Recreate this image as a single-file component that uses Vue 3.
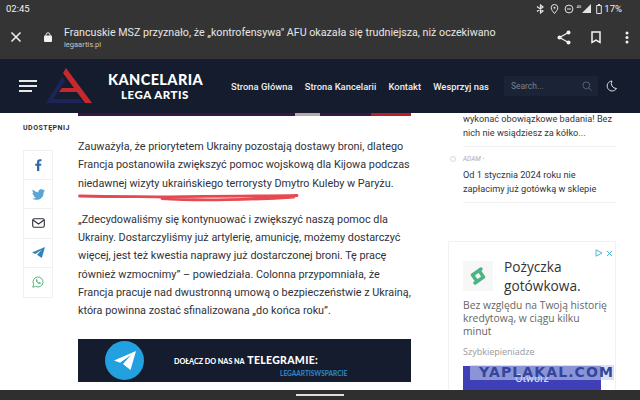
<script setup>
const menu = ['Strona Główna', 'Strona Kancelarii', 'Kontakt', 'Wesprzyj nas']
</script>

<template>
  <div class="screen">
    <div class="chrome">
      <div class="status">
        <span class="time">02:45</span>
        <div class="status_icons">
          <svg width="9" height="10" viewBox="0 0 9 10"><path d="M1 2.500 7 7 4.500 9V1L7 3 1 7.500" fill="none" stroke="#e4e4e4" stroke-width="1.200"/></svg>
          <svg width="9" height="10" viewBox="0 0 9 10"><path d="M4.500 9.500C2.500 7 1.200 5.500 1.200 3.800a3.300 3.300 0 0 1 6.600 0C7.800 5.500 6.500 7 4.500 9.500Z" fill="none" stroke="#e4e4e4" stroke-width="1"/><circle cx="4.500" cy="3.800" r="1" fill="#e4e4e4"/></svg>
          <svg width="10" height="10" viewBox="0 0 10 10"><circle cx="5" cy="5" r="3.900" fill="none" stroke="#e4e4e4" stroke-width="1"/><path d="M3 5h4" stroke="#e4e4e4" stroke-width="1"/></svg>
          <span class="net">4G</span>
          <svg width="9" height="9" viewBox="0 0 9 9"><path d="M9 0V9H0Z" fill="#e4e4e4"/></svg>
          <svg width="6" height="10" viewBox="0 0 6 10"><path d="M2 .5h2M.7 1.500h4.600v8H.7Z" fill="none" stroke="#e4e4e4"/></svg>
          <span class="battery">17%</span>
        </div>
      </div>
      <div class="url_row">
        <svg class="close" width="12" height="12" viewBox="0 0 12 12"><path d="M1.500 1.500 10.500 10.500M10.500 1.500 1.500 10.500" stroke="#f2f2f2" stroke-width="1.500"/></svg>
        <svg class="lock" width="8" height="10" viewBox="0 0 8 10"><path d="M2 4V2.800a2 2 0 0 1 4 0V4" fill="none" stroke="#f2f2f2"/><rect y="3.500" width="8" height="6.500" rx="1" fill="#f2f2f2"/></svg>
        <div class="url_text">
          <div class="page_title">Francuskie MSZ przyznało, że „kontrofensywa" AFU okazała się trudniejsza, niż oczekiwano</div>
          <div class="page_host">legaartis.pl</div>
        </div>
        <svg class="share" width="14" height="15" viewBox="0 0 14 15"><circle cx="11.500" cy="2.500" r="2" fill="#f2f2f2"/><circle cx="11.500" cy="12.500" r="2" fill="#f2f2f2"/><circle cx="2.500" cy="7.500" r="2" fill="#f2f2f2"/><path d="M11.500 2.500 2.500 7.500 11.500 12.500" fill="none" stroke="#f2f2f2" stroke-width="1.200"/></svg>
        <svg class="bookmark" width="10" height="13" viewBox="0 0 10 13"><path d="M1 1h8v10.500L5 9.200 1 11.500Z" fill="none" stroke="#f2f2f2" stroke-width="1.500"/></svg>
        <svg class="more" width="4" height="13" viewBox="0 0 4 13"><circle cx="2" cy="2" r="1.500" fill="#f2f2f2"/><circle cx="2" cy="6.500" r="1.500" fill="#f2f2f2"/><circle cx="2" cy="11" r="1.500" fill="#f2f2f2"/></svg>
      </div>
    </div>

    <header class="site_nav">
      <div class="burger"><span></span><span></span><span class="short"></span></div>
      <svg class="logo" width="47" height="36" viewBox="0 0 47 36">
        <path d="M16 9 19 13 7 31H34L37 35H0Z" fill="#1c2458"/>
        <path d="M20 0 46 35H39L17 5ZM16 20H30L33 24H13Z" fill="#c5282f"/>
      </svg>
      <div class="brand">
        <div class="brand_top">KANCELARIA</div>
        <div class="brand_sub">LEGA ARTIS</div>
      </div>
      <nav class="menu">
        <a v-for="item in menu" :key="item">{{ item }}</a>
      </nav>
      <div class="search">
        <span>Search...</span>
        <svg width="10" height="10" viewBox="0 0 10 10"><circle cx="4.300" cy="4.300" r="3.400" fill="none" stroke="#59606e" stroke-width="1"/><path d="M6.800 6.800 9.500 9.500" stroke="#59606e" stroke-width="1"/></svg>
      </div>
      <svg class="moon" width="11" height="12" viewBox="0 0 11 12"><path d="M6 1a5 5 0 1 0 4.500 7.500A5 5 0 0 1 6 1Z" fill="none" stroke="#dfe1e5" stroke-width="1"/></svg>
    </header>

    <main class="page">
      <aside class="share_col">
        <div class="share_label">UDOSTĘPNIJ</div>
        <div class="share_list">
          <div class="share_item">
            <svg width="7" height="12" viewBox="0 0 7 12"><path d="M2 12V6.800H.2V4.700H2V3.200C2 1.200 3.200.2 4.800.2H6.500V2.200H5.300C4.500 2.200 4.300 2.600 4.300 3.300V4.700H6.400L6.100 6.800H4.300V12Z" fill="#2d6ba6"/></svg>
          </div>
          <div class="share_item">
            <svg width="13" height="11" viewBox="0 0 13 11"><path d="M13 1.300c-.5.200-1 .4-1.500.4.500-.3 1-.8 1.200-1.400-.5.300-1.100.5-1.700.7A2.700 2.700 0 0 0 6.400 3.400C4.200 3.300 2.200 2.200.9.600.200 1.800.500 3.400 1.700 4.200c-.4 0-.8-.1-1.200-.3 0 1.300.9 2.400 2.100 2.700-.4.100-.8.100-1.200 0 .3 1.100 1.300 1.800 2.500 1.900C2.700 9.400 1.300 9.900 0 9.700 4.300 12.400 11.800 10.500 11.700 3c.5-.4 1-.9 1.300-1.700Z" fill="#5aa4d6"/></svg>
          </div>
          <div class="share_item">
            <svg width="13" height="10" viewBox="0 0 13 10"><rect x=".7" y=".7" width="11.600" height="8.600" rx="1.500" fill="none" stroke="#2f3138" stroke-width="1.100"/><path d="M1 2 6.500 6 12 2" fill="none" stroke="#2f3138" stroke-width="1.100"/></svg>
          </div>
          <div class="share_item">
            <svg width="13" height="11" viewBox="0 0 13 11"><path d="M13 0 0 5.500 3.500 7 10 2.500 5 7.800 9.800 11Z" fill="#2a86bd"/></svg>
          </div>
          <div class="share_item">
            <svg width="12" height="12" viewBox="0 0 12 12"><path d="M.8 11.200 1.600 8.300A5 5 0 1 1 3.700 10.400Z" fill="none" stroke="#55b27a" stroke-width="1"/><path d="M4 3.500c-.6 1.800 2 4.700 4.300 4.400l.6-1.200-1.300-.7-.6.600C6 6.200 5.500 5.500 5.200 4.900l.5-.6L5 3.200Z" fill="#55b27a"/></svg>
          </div>
        </div>
      </aside>

      <article class="article">
        <div class="top_image"><span class="top_photo"></span><span class="top_red"></span></div>
        <p class="first">Zauważyła, że priorytetem Ukrainy pozostają dostawy broni, dlatego Francja postanowiła zwiększyć pomoc wojskową dla Kijowa podczas <span class="underlined">niedawnej wizyty ukraińskiego terrorysty Dmytro Kuleby<svg class="scribble" width="222" height="10" viewBox="0 0 222 10"><path d="M1.500 3C40 4 75 3.500 84 4 130 2.500 180 3.500 219 2.500M84 5.500C120 8 180 6.500 216 4" fill="none" stroke="#e8484f" stroke-width="2.800" stroke-linecap="round"/></svg></span> w Paryżu.</p>
        <p>„Zdecydowaliśmy się kontynuować i zwiększyć naszą pomoc dla Ukrainy. Dostarczyliśmy już artylerię, amunicję, możemy dostarczyć więcej, jest też kwestia naprawy już dostarczonej broni. Tę pracę również wzmocnimy” – powiedziała. Colonna przypomniała, że Francja pracuje nad dwustronną umową o bezpieczeństwie z Ukrainą, która powinna zostać sfinalizowana „do końca roku”.</p>
        <div class="tg_banner">
          <div class="tg_circle">
            <svg width="22" height="19" viewBox="0 0 22 19"><path d="M22 0 0 9.500 6 11.800 17 4 9 13 16.500 19Z" fill="#fff"/></svg>
          </div>
          <div class="tg_text">
            <div class="tg_line"><span class="tg_small">DOŁĄCZ DO NAS NA</span> <span class="tg_big">TELEGRAMIE:</span></div>
            <div class="tg_link">LEGAARTISWSPARCIE</div>
          </div>
        </div>
      </article>

      <aside class="sidebar">
        <div class="post_title">wykonać obowiązkowe badania! Bez nich nie wsiądziesz za kółko...</div>
        <div class="post">
          <div class="post_author"><i class="dot"></i>ADAM -</div>
          <div class="post_title">Od 1 stycznia 2024 roku nie zapłacimy już gotówką w sklepie</div>
        </div>
        <div class="ad">
          <div class="ad_marks">
            <svg width="8" height="8" viewBox="0 0 8 8"><path d="M1 .8 7 4 1 7.200Z" fill="none" stroke="#4fb6d6"/></svg>
            <svg width="7" height="7" viewBox="0 0 7 7"><path d="M1 1 6 6M6 1 1 6" stroke="#4fb6d6"/></svg>
          </div>
          <div class="ad_head">
            <div class="ad_icon">
              <svg width="18" height="18" viewBox="0 0 18 18"><path d="M12 2 3.500 8 7 13M6 16 14.500 10 11 5" fill="none" stroke="#4ab583" stroke-width="3.400" stroke-linecap="round" stroke-linejoin="round"/></svg>
            </div>
            <div class="ad_title">Pożyczka gotówkowa.</div>
          </div>
          <div class="ad_desc">Bez względu na Twoją historię kredytową, w ciągu kilku minut</div>
          <div class="ad_source">Szybkiepieniadze</div>
          <div class="ad_button">Otwórz</div>
        </div>
      </aside>
    </main>

    <div class="watermark">YAPLAKAL.COM</div>
    <div class="gesture_bar"><span></span></div>
  </div>
</template>

<style>
body {
  margin: 0;
}
</style>

<style scoped>
.screen {
  position: relative;
  display: flex;
  flex-direction: column;
  width: 640px;
  height: 400px;
  overflow: hidden;
  background: #fff;
  font-family: Roboto, "Liberation Sans", sans-serif;
}

/* browser chrome */
.chrome {
  height: 59px;
  background: #343434;
  color: #f0f0f0;
}

.status {
  display: flex;
  justify-content: space-between;
  align-items: center;
  height: 17px;
  padding: 0 18px 0 6px;
}

.time {
  font-size: 9.500px;
}

.status_icons {
  display: flex;
  align-items: center;
  gap: 5px;
}

.net {
  font-size: 4px;
  margin: -5px -4px 0 -3px;
}

.battery {
  font-size: 9.500px;
  margin-left: -3px;
}

.url_row {
  display: flex;
  align-items: center;
  height: 37px;
  padding-top: 3px;
  box-sizing: border-box;
}

.close {
  margin-left: 10px;
}

.lock {
  margin: 0 0 0 22px;
}

.url_text {
  width: 492px;
  margin-left: 12px;
  padding-top: 2px;
}

.page_title {
  font-size: 10.700px;
  white-space: nowrap;
  line-height: 14px;
  color: #e6e6e6;
}

.page_host {
  font-size: 7.500px;
  line-height: 10px;
  color: #c4c4c4;
}

.share {
  margin-left: 1px;
}

.bookmark {
  margin-left: 20px;
}

.more {
  margin-left: 24px;
}

/* site header */
.site_nav {
  position: relative;
  z-index: 2;
  display: flex;
  align-items: center;
  height: 54px;
  background: #141c2d;
  color: #fff;
  flex: none;
}

.burger {
  display: flex;
  flex-direction: column;
  gap: 3px;
  width: 18px;
  margin-left: 19px;
}

.burger span {
  height: 2px;
  background: #e8e8e8;
}

.burger .short {
  width: 13px;
}

.logo {
  margin-left: 9px;
}

.brand {
  width: 94px;
  margin-left: 15px;
  padding-top: 2px;
  text-align: center;
  font-family: Lato, "Liberation Sans", sans-serif;
  font-weight: 900;
}

.brand_top {
  font-size: 14.500px;
  line-height: 16px;
  letter-spacing: .4px;
}

.brand_sub {
  font-size: 11.500px;
  line-height: 14px;
  letter-spacing: .5px;
}

.menu {
  display: flex;
  gap: 12.200px;
  margin-left: 29px;
  font-size: 9.400px;
  font-weight: 500;
  color: #eceef1;
  white-space: nowrap;
}

.search {
  display: flex;
  justify-content: space-between;
  align-items: center;
  width: 94px;
  height: 20px;
  margin-left: 15px;
  padding: 0 6px 0 7px;
  box-sizing: border-box;
  background: #1b2436;
  font-size: 8.500px;
  color: #7b818d;
}

.moon {
  margin-left: 8px;
}

/* page */
.page {
  display: flex;
  flex: 1;
  min-height: 0;
  overflow: hidden;
}

.share_col {
  width: 78px;
  flex: none;
}

.share_label {
  margin: 11px 0 0 23px;
  font-size: 7px;
  font-weight: 700;
  letter-spacing: .5px;
  line-height: 9px;
  color: #2d2f36;
}

.share_list {
  width: 30px;
  margin: 17px 0 0 23px;
  border: 1px solid #f0f0f0;
  box-sizing: border-box;
}

.share_item {
  display: flex;
  align-items: center;
  justify-content: center;
  height: 29.200px;
  border-bottom: 1px solid #f0f0f0;
  box-sizing: border-box;
}

.share_item:last-child {
  border-bottom: 0;
}

.article {
  width: 333px;
  flex: none;
  font-size: 10.830px;
  line-height: 18.300px;
  color: #30323a;
}

.top_image {
  display: flex;
  height: 3px;
  background: #3a1446;
  justify-content: flex-end;
}

.top_photo {
  width: 25px;
  margin-right: 51px;
  background: #b8a8a8;
}

.top_red {
  width: 40px;
  background: #bb1e2b;
}

.article p {
  margin: 0 0 18px;
}

.article .first {
  margin-top: 22px;
}

.underlined {
  position: relative;
}

.scribble {
  position: absolute;
  left: 0;
  top: 16px;
  pointer-events: none;
}

.tg_banner {
  display: flex;
  align-items: center;
  height: 43px;
  margin-top: 18px;
  background: #141c2d;
}

.tg_circle {
  display: flex;
  align-items: center;
  justify-content: center;
  width: 39px;
  height: 39px;
  margin-left: 27px;
  border-radius: 50%;
  background: #22a0e0;
}

.tg_text {
  margin-left: 30px;
  padding-top: 12px;
  width: 175px;
  font-family: Lato, "Liberation Sans", sans-serif;
  font-weight: 900;
  color: #fff;
}

.tg_line {
  line-height: 12px;
  white-space: nowrap;
}

.tg_small {
  font-size: 7.200px;
}

.tg_big {
  font-size: 10.500px;
  letter-spacing: .3px;
}

.tg_link {
  margin-top: 2px;
  padding-left: 106px;
  font-size: 6.500px;
  line-height: 8px;
  color: #2b82c4;
  white-space: nowrap;
}

.sidebar {
  width: 168px;
  margin-left: 37px;
  flex: none;
  font-size: 9.200px;
  line-height: 14px;
  color: #33353c;
}

.sidebar > .post_title {
  margin: -1px 0 0 15px;
  padding-bottom: 6px;
  border-bottom: 1px solid #f1f1f1;
}

.post {
  margin: 0 0 0 15px;
  padding: 7px 0 6px;
  border-bottom: 1px solid #f1f1f1;
}

.post_author {
  position: relative;
  font-size: 6.500px;
  line-height: 10px;
  font-style: italic;
  color: #aaa;
  margin-bottom: 4px;
}

.dot {
  position: absolute;
  left: -13px;
  top: 2px;
  width: 4px;
  height: 4px;
  border: 1px solid #d8d8d8;
  border-radius: 50%;
}

.ad {
  position: relative;
  height: 160px;
  margin-top: 38px;
  padding: 15px 14px 0;
  box-sizing: border-box;
  border: 1px solid #f2f2f2;
}

.ad_marks {
  position: absolute;
  top: 7px;
  right: 2px;
  display: flex;
  gap: 3px;
  align-items: center;
}

.ad_head {
  display: flex;
  gap: 11px;
  align-items: center;
}

.ad_icon {
  display: flex;
  align-items: center;
  justify-content: center;
  width: 30px;
  height: 30px;
  background: #f7f7f7;
  flex: none;
}

.ad_title {
  width: 90px;
  font-family: "Open Sans", Roboto, sans-serif;
  font-size: 13.700px;
  line-height: 19px;
  color: #333;
}

.ad_desc {
  margin: 4px -8px 0 0;
  font-family: "Open Sans", Roboto, sans-serif;
  font-size: 10.300px;
  line-height: 13px;
  color: #666;
}

.ad_source {
  margin-top: 7px;
  font-family: "Open Sans", Roboto, sans-serif;
  font-size: 9px;
  line-height: 13px;
  color: #999;
}

.ad_button {
  margin-top: 8px;
  height: 26px;
  background: #3f40b8;
  color: #e8e8f5;
  font-size: 10.500px;
  line-height: 26px;
  text-align: center;
}

/* overlay stamped on the screenshot */
.watermark {
  position: absolute;
  left: 470px;
  top: 365px;
  width: 144px;
  height: 15px;
  background: rgba(190, 205, 235, .6);
  color: #34459b;
  font-family: "DejaVu Sans", sans-serif;
  font-weight: 700;
  font-size: 14px;
  letter-spacing: 1.100px;
  line-height: 14px;
  text-align: right;
  white-space: nowrap;
  overflow: hidden;
}

.gesture_bar {
  position: relative;
  z-index: 2;
  display: flex;
  justify-content: center;
  height: 10px;
  background: #2f2f2f;
  flex: none;
}

.gesture_bar span {
  width: 48px;
  height: 1.500px;
  margin-top: 4px;
  background: #dcdcdc;
}
</style>
